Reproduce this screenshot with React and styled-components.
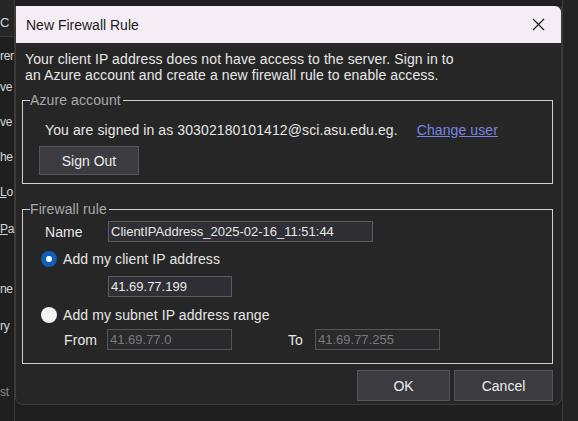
import React from "react";
import styled, { createGlobalStyle } from "styled-components";

const GlobalStyle = createGlobalStyle`
  html, body {
    margin: 0;
    padding: 0;
    background: #1f1f1f;
    font-family: "Liberation Sans", Arial, sans-serif;
  }
`;

const Page = styled.div`
  position: relative;
  width: 578px;
  height: 421px;
  overflow: hidden;
  display: flex;
  background: #1f1f1f;
`;

// BACKGROUND APP (mostly hidden by the dialog)
const SidePane = styled.div`
  width: 14px;
  border-right: 1px solid #3a3a3a;
  display: flex;
  flex-direction: column;
`;
const SideHeader = styled.div`
  height: 37px;
  background: #262626;
  border-bottom: 1px solid #3a3a3a;
  display: flex;
  align-items: flex-end;
  padding-bottom: 6px;
  box-sizing: border-box;
  color: #d6d6d6;
  font-size: 13px;
`;
const SideItem = styled.div`
  height: 16px;
  margin-top: ${(p) => p.gap}px;
  color: ${(p) => (p.dim ? "#8a8a8a" : "#d6d6d6")};
  font-size: 12px;
  white-space: nowrap;
  letter-spacing: -0.3px;
  & u {
    text-decoration: underline;
  }
`;
const MainArea = styled.div`
  flex: 1;
  background: #1f1f1f;
  display: flex;
  justify-content: flex-end;
`;
const RightStrip = styled.div`
  width: 15px;
  border-left: 1px solid #3b3b3b;
  background: #242424;
`;

// DIALOG
const Dialog = styled.div`
  position: absolute;
  left: 15px;
  top: 6px;
  width: 547px;
  height: 399px;
  box-sizing: border-box;
  background: #262626;
  border: 1px solid #3c3c3c;
  border-top: none;
  border-radius: 0 0 8px 8px;
  display: flex;
  flex-direction: column;
  color: #e6e6e6;
  font-size: 14px;
  letter-spacing: 0.1px;
`;
const TitleBar = styled.div`
  height: 37px;
  background: #f5edf5;
  display: flex;
  align-items: center;
  justify-content: space-between;
  padding: 0 16px 0 10px;
  color: #1b1b1b;
  font-size: 14px;
  letter-spacing: 0;
  border-top-right-radius: 6px;
`;
const CloseButton = styled.button`
  width: 14px;
  height: 14px;
  padding: 0;
  border: none;
  background: transparent;
  display: flex;
  align-items: center;
  justify-content: center;
`;
const Body = styled.div`
  flex: 1;
  padding: 0 8px 0 6px;
  display: flex;
  flex-direction: column;
`;
const Intro = styled.p`
  margin: 8px 0 0 3px;
  line-height: 16px;
  color: #e8e8e8;
`;
const Group = styled.fieldset`
  margin: ${(p) => p.top}px 0 0 0;
  padding: 0;
  border: 1px solid #d2d2d2;
  height: ${(p) => p.h}px;
  box-sizing: border-box;
  display: flex;
  flex-direction: column;
`;
const Legend = styled.legend`
  margin-left: 7px;
  padding: 0 2px 0 0;
  color: #a9a9a9;
  font-size: 14px;
  line-height: 14px;
`;
const SignedRow = styled.div`
  display: flex;
  align-items: center;
  margin: 15px 0 0 22px;
  gap: 19px;
`;
const Link = styled.a`
  color: #7d83e2;
  text-decoration: underline;
  cursor: pointer;
`;
const Button = styled.button`
  width: ${(p) => p.w}px;
  height: ${(p) => p.h}px;
  background: #3b3b40;
  border: 1px solid #55555a;
  color: #ececec;
  font-family: inherit;
  font-size: 14px;
  padding: 0;
`;
const SignOutWrap = styled.div`
  margin: 8px 0 0 16px;
`;
const Row = styled.div`
  display: flex;
  align-items: center;
  margin: ${(p) => p.top || 0}px 0 0 ${(p) => p.left || 0}px;
`;
const Label = styled.span`
  width: ${(p) => p.w}px;
  margin-left: ${(p) => p.ml || 0}px;
  color: #e8e8e8;
`;
const TextInput = styled.input`
  width: ${(p) => p.w}px;
  height: 21px;
  box-sizing: border-box;
  background: #2f2f35;
  border: 1px solid #5c5c5c;
  color: #e8e8e8;
  font-family: inherit;
  font-size: 13px;
  letter-spacing: 0;
  padding: 0 2px;
  outline: none;
  &:disabled {
    background: #2a2a2c;
    color: #7a7a7a;
    border-color: #555;
  }
`;
const Radio = styled.span`
  width: 16px;
  height: 16px;
  box-sizing: border-box;
  border-radius: 50%;
  background: ${(p) => (p.checked ? "#0c5fba" : "#f2f2f2")};
  display: flex;
  align-items: center;
  justify-content: center;
  margin-right: 6px;
  &::after {
    content: "";
    display: ${(p) => (p.checked ? "block" : "none")};
    width: 6px;
    height: 6px;
    border-radius: 50%;
    background: #ffffff;
  }
`;
const Footer = styled.div`
  display: flex;
  justify-content: flex-end;
  gap: 4px;
  margin-top: 6px;
`;

const App = () => {
  return (
    <>
      <GlobalStyle />
      <Page>
        <SidePane>
          <SideHeader>C</SideHeader>
          <SideItem gap={12}>rer</SideItem>
          <SideItem gap={15}>ve</SideItem>
          <SideItem gap={19}>ve</SideItem>
          <SideItem gap={19}>he</SideItem>
          <SideItem gap={19}>
            <u>L</u>o
          </SideItem>
          <SideItem gap={21}>
            <u>P</u>a
          </SideItem>
          <SideItem gap={44}>ne</SideItem>
          <SideItem gap={21}>ry</SideItem>
          <SideItem gap={50} dim>
            st
          </SideItem>
        </SidePane>
        <MainArea>
          <RightStrip />
        </MainArea>

        <Dialog>
          <TitleBar>
            New Firewall Rule
            <CloseButton>
              <svg width="13" height="13" viewBox="0 0 13 13">
                <path d="M1 1 L12 12 M12 1 L1 12" stroke="#1b1b1b" strokeWidth="1.2" />
              </svg>
            </CloseButton>
          </TitleBar>
          <Body>
            <Intro>
              Your client IP address does not have access to the server. Sign in to
              <br />
              an Azure account and create a new firewall rule to enable access.
            </Intro>

            <Group top={10} h={91}>
              <Legend>Azure account</Legend>
              <SignedRow>
                <span>You are signed in as 30302180101412@sci.asu.edu.eg.</span>
                <Link>Change user</Link>
              </SignedRow>
              <SignOutWrap>
                <Button w={100} h={29}>
                  Sign Out
                </Button>
              </SignOutWrap>
            </Group>

            <Group top={18} h={162}>
              <Legend>Firewall rule</Legend>
              <Row top={5} left={22}>
                <Label w={63}>Name</Label>
                <TextInput w={265} readOnly value="ClientIPAddress_2025-02-16_11:51:44" />
              </Row>
              <Row top={9} left={18}>
                <Radio checked />
                <span>Add my client IP address</span>
              </Row>
              <Row top={9} left={85}>
                <TextInput w={124} readOnly value="41.69.77.199" />
              </Row>
              <Row top={10} left={18}>
                <Radio />
                <span>Add my subnet IP address range</span>
              </Row>
              <Row top={6} left={41}>
                <Label w={43}>From</Label>
                <TextInput w={125} disabled value="41.69.77.0" />
                <Label w={27} ml={56}>
                  To
                </Label>
                <TextInput w={125} disabled value="41.69.77.255" />
              </Row>
            </Group>

            <Footer>
              <Button w={93} h={31}>
                OK
              </Button>
              <Button w={99} h={31}>
                Cancel
              </Button>
            </Footer>
          </Body>
        </Dialog>
      </Page>
    </>
  );
};

export default App;
